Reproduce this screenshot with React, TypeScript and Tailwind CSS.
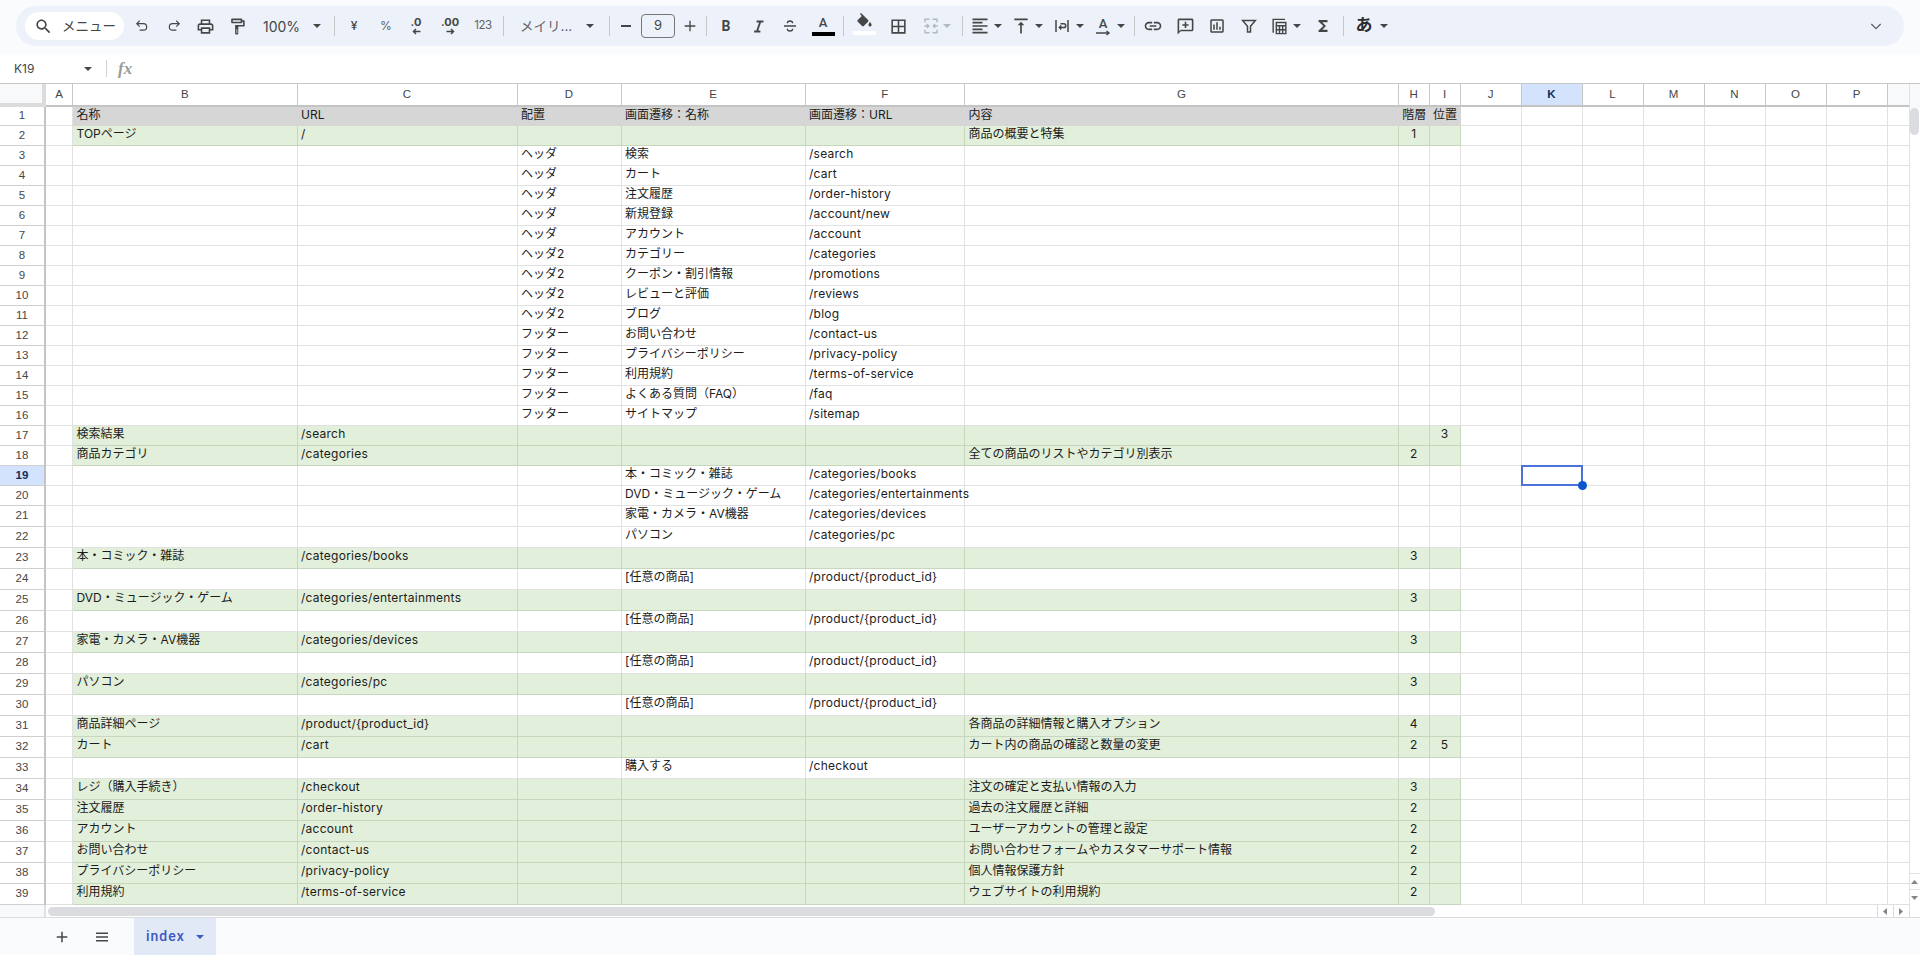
import type { ReactNode } from 'react';

type Row = { green?: boolean; head?: boolean; cells: string[] };

const link = (place: string, name: string, url: string): Row => ({ cells: ['', '', place, name, url, '', '', ''] });
const page = (name: string, url: string, text = '', level = '', pos = ''): Row => ({
  green: true,
  cells: [name, url, '', '', '', text, level, pos],
});

const rows: Row[] = [
  { head: true, cells: ['名称', 'URL', '配置', '画面遷移：名称', '画面遷移：URL', '内容', '階層', '位置'] },
  page('TOPページ', '/', '商品の概要と特集', '1'),
  link('ヘッダ', '検索', '/search'),
  link('ヘッダ', 'カート', '/cart'),
  link('ヘッダ', '注文履歴', '/order-history'),
  link('ヘッダ', '新規登録', '/account/new'),
  link('ヘッダ', 'アカウント', '/account'),
  link('ヘッダ2', 'カテゴリー', '/categories'),
  link('ヘッダ2', 'クーポン・割引情報', '/promotions'),
  link('ヘッダ2', 'レビューと評価', '/reviews'),
  link('ヘッダ2', 'ブログ', '/blog'),
  link('フッター', 'お問い合わせ', '/contact-us'),
  link('フッター', 'プライバシーポリシー', '/privacy-policy'),
  link('フッター', '利用規約', '/terms-of-service'),
  link('フッター', 'よくある質問（FAQ）', '/faq'),
  link('フッター', 'サイトマップ', '/sitemap'),
  page('検索結果', '/search', '', '', '3'),
  page('商品カテゴリ', '/categories', '全ての商品のリストやカテゴリ別表示', '2'),
  link('', '本・コミック・雑誌', '/categories/books'),
  link('', 'DVD・ミュージック・ゲーム', '/categories/entertainments'),
  link('', '家電・カメラ・AV機器', '/categories/devices'),
  link('', 'パソコン', '/categories/pc'),
  page('本・コミック・雑誌', '/categories/books', '', '3'),
  link('', '[任意の商品]', '/product/{product_id}'),
  page('DVD・ミュージック・ゲーム', '/categories/entertainments', '', '3'),
  link('', '[任意の商品]', '/product/{product_id}'),
  page('家電・カメラ・AV機器', '/categories/devices', '', '3'),
  link('', '[任意の商品]', '/product/{product_id}'),
  page('パソコン', '/categories/pc', '', '3'),
  link('', '[任意の商品]', '/product/{product_id}'),
  page('商品詳細ページ', '/product/{product_id}', '各商品の詳細情報と購入オプション', '4'),
  page('カート', '/cart', 'カート内の商品の確認と数量の変更', '2', '5'),
  link('', '購入する', '/checkout'),
  page('レジ（購入手続き）', '/checkout', '注文の確定と支払い情報の入力', '3'),
  page('注文履歴', '/order-history', '過去の注文履歴と詳細', '2'),
  page('アカウント', '/account', 'ユーザーアカウントの管理と設定', '2'),
  page('お問い合わせ', '/contact-us', 'お問い合わせフォームやカスタマーサポート情報', '2'),
  page('プライバシーポリシー', '/privacy-policy', '個人情報保護方針', '2'),
  page('利用規約', '/terms-of-service', 'ウェブサイトの利用規約', '2'),
];

const letters = ['A', 'B', 'C', 'D', 'E', 'F', 'G', 'H', 'I', 'J', 'K', 'L', 'M', 'N', 'O', 'P'];

const Icon = ({ d, size = 18, color = '#444746' }: { d: string; size?: number; color?: string }) => (
  <svg width={size} height={size} viewBox="0 0 24 24" fill={color} fillRule="evenodd">
    <path d={d} />
  </svg>
);

const Line = ({ d, size = 18, width = 2, color = '#444746' }: { d: string; size?: number; width?: number; color?: string }) => (
  <svg width={size} height={size} viewBox="0 0 24 24" fill="none" stroke={color} strokeWidth={width}>
    <path d={d} />
  </svg>
);

const Caret = ({ color = '#444746' }: { color?: string }) => (
  <svg width="8" height="4" viewBox="0 0 8 4">
    <path d="M0 0h8L4 4z" fill={color} />
  </svg>
);

const Divider = ({ w }: { w: string }) => (
  <div className={`flex h-full items-center justify-center ${w}`}>
    <div className="h-5 w-px bg-[#c7c7c7]" />
  </div>
);

const Tool = ({ w, children }: { w: string; children: ReactNode }) => (
  <div className={`flex h-full shrink-0 items-center justify-center ${w}`}>{children}</div>
);

const SmallArrow = ({ left }: { left?: boolean }) => (
  <svg width="9" height="7" viewBox="0 0 9 7" className="mt-px">
    <path d={left ? 'M8.5 3.5H2M4 1 1.5 3.5 4 6' : 'M.5 3.5H7M5 1l2.5 2.5L5 6'} fill="none" stroke="#444746" strokeWidth="1.5" />
  </svg>
);

const Toolbar = () => (
  <div className="flex h-[54px] bg-[#f9fbfd] pt-[6px] pr-4 pb-2 pl-4">
    <div className="flex h-10 w-full items-center rounded-[20px] bg-[#edf2fa] pl-[9px] text-[#444746]">
      <div className="mr-[2px] flex h-7 w-[99px] shrink-0 items-center rounded-full bg-white pl-[9px]">
        <Icon size={19} d="M15.5 14h-.79l-.28-.27C15.41 12.59 16 11.11 16 9.5 16 5.91 13.09 3 9.5 3S3 5.91 3 9.5 5.91 16 9.5 16c1.61 0 3.09-.59 4.23-1.57l.27.28v.79l5 4.99L20.49 19l-4.99-5zm-6 0C7.01 14 5 11.99 5 9.5S7.01 5 9.5 5 14 7.01 14 9.5 11.99 14 9.5 14z" />
        <span className="ml-[9px] text-[13.5px] whitespace-nowrap">メニュー</span>
      </div>
      <Tool w="w-[32px]">
        <Line size={14} d="M8 13 3 8l5-5M3 8h11.5a5.5 5.5 0 0 1 0 11H8" />
      </Tool>
      <Tool w="w-[31px]">
        <Line size={14} d="M16 13l5-5-5-5M21 8H9.5a5.5 5.5 0 0 0 0 11H16" />
      </Tool>
      <Tool w="w-[33px]">
        <Icon size={19} d="M19 8h-1V3H6v5H5c-1.66 0-3 1.34-3 3v6h4v4h12v-4h4v-6c0-1.66-1.34-3-3-3zM8 5h8v3H8V5zm8 12v2H8v-4h8v2zm2-2v-2H6v2H4v-4c0-.55.45-1 1-1h14c.55 0 1 .45 1 1v4h-2z" />
      </Tool>
      <Tool w="w-[30px]">
        <Icon size={19} d="M18 4V3c0-.55-.45-1-1-1H5c-.55 0-1 .45-1 1v4c0 .55.45 1 1 1h12c.55 0 1-.45 1-1V6h1v4H9v11c0 .55.45 1 1 1h2c.55 0 1-.45 1-1v-9h8V4h-3zM16 6H6V4h10v2zM10.8 15.5h.9v5h-.9z" />
      </Tool>
      <div className="flex h-full w-[76px] shrink-0 items-center pl-[11px]">
        <span className="w-[50px] text-[14px]">100%</span>
        <Caret />
      </div>
      <Divider w="w-[12px]" />
      <Tool w="w-[28px]">
        <span className="text-[12px] font-medium">¥</span>
      </Tool>
      <Tool w="w-[36px]">
        <span className="text-[12px] text-[#5f6368]">%</span>
      </Tool>
      <Tool w="w-[24px]">
        <div className="flex flex-col items-center">
          <span className="h-[10px] text-[11px] leading-[10px] font-bold">.0</span>
          <SmallArrow left />
        </div>
      </Tool>
      <Tool w="w-[44px]">
        <div className="flex flex-col items-center">
          <span className="h-[10px] text-[11px] leading-[10px] font-bold">.00</span>
          <SmallArrow />
        </div>
      </Tool>
      <Tool w="w-[22px]">
        <span className="text-[11.5px] tracking-[-0.4px] text-[#5f6368]">123</span>
      </Tool>
      <Divider w="w-[18px]" />
      <div className="flex h-full w-[88px] shrink-0 items-center pl-[8px]">
        <span className="w-[66px] text-[13.5px] whitespace-nowrap text-[#5f6368]">メイリ...</span>
        <Caret />
      </div>
      <Divider w="w-[18px]" />
      <Tool w="w-[16px]">
        <div className="h-[2px] w-[10px] bg-[#444746]" />
      </Tool>
      <div className="ml-[7px] flex h-6 w-[34px] shrink-0 items-center justify-center rounded-[4px] border border-[#747775] text-[13px]">
        9
      </div>
      <Tool w="w-[30px]">
        <Line size={16} d="M12 4v16M4 12h16" />
      </Tool>
      <Divider w="w-[2px]" />
      <Tool w="w-[38px]">
        <span className="font-['Roboto',sans-serif] text-[14px] font-bold">B</span>
      </Tool>
      <Tool w="w-[26px]">
        <Line size={15} width={3} d="M9 4h11M5 20h10M15 4 9.5 20" />
      </Tool>
      <Tool w="w-[38px]">
        <Line size={16} width={2} d="M3 12h18M16 8c0-2.2-1.8-3.5-4-3.5S8 5.8 8 8M8 16c0 2.2 1.8 3.5 4 3.5s4-1.3 4-3.5" />
      </Tool>
      <div className="flex h-full w-[28px] shrink-0 flex-col items-center pt-[9px]">
        <span className="h-[16px] font-['Roboto',sans-serif] text-[13px] leading-[16px] font-medium">A</span>
        <div className="mt-[1px] h-[4px] w-[23px] bg-black" />
      </div>
      <Divider w="w-[12px]" />
      <div className="flex h-full w-[30px] shrink-0 flex-col items-center pt-[7px]">
        <Icon size={19} d="M16.56 8.94 7.62 0 6.21 1.41l2.38 2.38-5.15 5.15c-.59.59-.59 1.54 0 2.12l5.5 5.5c.29.29.68.44 1.06.44s.77-.15 1.06-.44l5.5-5.5c.59-.58.59-1.53 0-2.12zM19 11.5s-2 2.17-2 3.5c0 1.1.9 2 2 2s2-.9 2-2c0-1.33-2-3.5-2-3.5z" />
        <div className="mt-[-1px] h-[4px] w-[23px] bg-white" />
      </div>
      <Tool w="w-[38px]">
        <Icon size={19} d="M3 3v18h18V3H3zm8 16H5v-6h6v6zm0-8H5V5h6v6zm8 8h-6v-6h6v6zm0-8h-6V5h6v6z" />
      </Tool>
      <div className="flex h-full w-[41px] shrink-0 items-center pl-[5px]">
        <Line size={18} color="#b4bac1" d="M10 3H4v4M4 17v4h6M14 3h6v4M20 17v4h-6M3 12h6M6.5 9.5 9 12l-2.5 2.5M21 12h-6M17.5 9.5 15 12l2.5 2.5" />
        <div className="ml-[3px]">
          <Caret color="#b4bac1" />
        </div>
      </div>
      <Divider w="w-[8px]" />
      <div className="mr-[2px] ml-[2px] flex h-full shrink-0">
        <Tool w="w-[24px]">
          <Icon size={20} d="M15 15H3v2h12v-2zm0-8H3v2h12V7zM3 13h18v-2H3v2zm0 8h18v-2H3v2zM3 3v2h18V3H3z" />
        </Tool>
        <Tool w="w-[12px]">
          <Caret />
        </Tool>
      </div>
      <div className="ml-[3px] flex h-full shrink-0">
        <Tool w="w-[24px]">
          <Icon size={20} d="M8 11h3v10h2V11h3l-4-4-4 4zM4 3v2h16V3H4z" />
        </Tool>
        <Tool w="w-[12px]">
          <Caret />
        </Tool>
      </div>
      <div className="ml-[5px] flex h-full shrink-0">
        <Tool w="w-[24px]">
          <Line size={18} d="M4 4v16M20 4v16M10 9h4.5a2.5 2.5 0 0 1 0 5H9M11 11.5 8.5 14l2.5 2.5" />
        </Tool>
        <Tool w="w-[12px]">
          <Caret />
        </Tool>
      </div>
      <div className="ml-[5px] flex h-full shrink-0">
        <Tool w="w-[24px]">
          <div className="flex flex-col items-center">
            <span className="h-[13px] font-['Roboto',sans-serif] text-[13px] leading-[13px] font-medium">A</span>
            <svg width="15" height="6" viewBox="0 0 15 6">
              <path d="M0 3h13M10.5 1 13 3l-2.5 2" fill="none" stroke="#444746" strokeWidth="1.4" />
            </svg>
          </div>
        </Tool>
        <Tool w="w-[12px]">
          <Caret />
        </Tool>
      </div>
      <Divider w="w-[14px]" />
      <Tool w="w-[24px]">
        <Icon size={20} d="M3.9 12c0-1.71 1.39-3.1 3.1-3.1h4V7H7c-2.76 0-5 2.24-5 5s2.24 5 5 5h4v-1.9H7c-1.71 0-3.1-1.39-3.1-3.1zM8 13h8v-2H8v2zm9-6h-4v1.9h4c1.71 0 3.1 1.39 3.1 3.1s-1.39 3.1-3.1 3.1h-4V17h4c2.76 0 5-2.24 5-5s-2.24-5-5-5z" />
      </Tool>
      <Tool w="w-[40px]">
        <Icon size={19} d="M20 2H4c-1.1 0-2 .9-2 2v18l4-4h14c1.1 0 2-.9 2-2V4c0-1.1-.9-2-2-2zm0 14H6l-2 2V4h16v12zM11 6h2v3h3v2h-3v3h-2v-3H8V9h3z" />
      </Tool>
      <Tool w="w-[24px]">
        <Icon size={18} d="M19 3H5c-1.1 0-2 .9-2 2v14c0 1.1.9 2 2 2h14c1.1 0 2-.9 2-2V5c0-1.1-.9-2-2-2zm0 16H5V5h14v14zM7 10h2v7H7zm4-3h2v10h-2zm4 6h2v4h-2z" />
      </Tool>
      <Tool w="w-[40px]">
        <Line size={18} d="M3.5 4.5h17L14 12.5V20h-4v-7.5z" />
      </Tool>
      <Tool w="w-[20px]">
        <Line size={19} d="M4 20V3h15M8 7h12v14H8zM8 11h12M8 16h12M12 11v10M16 11v10" width={1.8} />
      </Tool>
      <Tool w="w-[16px]">
        <Caret />
      </Tool>
      <Tool w="w-[36px]">
        <Icon size={18} d="M18 4H6v2l6.5 6L6 18v2h12v-3h-7l5-5-5-5h7z" />
      </Tool>
      <Divider w="w-[4px]" />
      <div className="ml-[5px] flex h-full w-[28px] shrink-0 items-center justify-center text-[17px] font-bold text-[#2b2b2b]">
        あ
      </div>
      <Tool w="w-[12px]">
        <Caret />
      </Tool>
      <div className="mr-4 ml-auto flex h-full w-6 shrink-0 items-center justify-center">
        <Line size={16} width={2} d="M5 9l7 7 7-7" color="#5f6368" />
      </div>
    </div>
  </div>
);

const FormulaBar = () => (
  <div className="flex h-[29px] items-center bg-white pl-[14px]">
    <span className="w-[70px] text-[12px] text-[#444746]">K19</span>
    <Caret />
    <div className="ml-[14px] h-[17px] w-px bg-[#d3d3d3]" />
    <span className="ml-[11px] font-['Liberation_Serif',serif] text-[17px] font-bold text-[#9b9b9b] italic">fx</span>
  </div>
);

const Cell = ({ row, col, value }: { row: Row; col: number; value: string }) => {
  const centered = col >= 6;
  const latin = value.startsWith('/');
  const tone = row.head
    ? 'bg-[#d6d6d6]'
    : row.green
      ? 'border-r border-b border-[#c6d7bd] bg-[#e2efda]'
      : 'border-r border-b border-[#e1e1e1] bg-white';
  return (
    <div
      className={`h-full text-[12px] leading-[15px] whitespace-nowrap text-[#1c1c1c] ${tone} ${
        centered ? 'text-center' : 'px-[3.5px]'
      } ${latin ? 'relative z-[1] tracking-[0.25px]' : ''}`}
    >
      {value}
    </div>
  );
};

const Sheet = () => (
  <div className="grid h-[821px] grid-cols-[46px_27px_224.5px_220px_104px_184px_159.5px_434px_30.5px_31px_61px_61px_61px_61px_61px_61px_61px_21px] grid-rows-[23px_19px_repeat(19,20px)_repeat(19,21px)] overflow-hidden">
    <div className="border-r-[4px] border-b-[4px] border-[#dcdcdc] bg-[#f8f9fa]" />
    {letters.map((l) => (
      <div
        key={l}
        className={`flex items-center justify-center border-r border-b-2 border-r-[#c7c7c7] border-b-[#c4c4c4] font-['Liberation_Sans',sans-serif] text-[11.5px] ${
          l === 'K' ? 'bg-[#d3e3fd] font-bold text-[#0b2f5c]' : 'bg-white text-[#444746]'
        }`}
      >
        {l}
      </div>
    ))}
    <div className="border-b-2 border-b-[#c4c4c4] bg-[#f8f9fa]" />
    {rows.map((row, i) => (
      <div key={i} className="contents">
        <div
          className={`flex items-center justify-center border-r-2 border-b border-r-[#c4c4c4] border-b-[#cfcfcf] font-['Liberation_Sans',sans-serif] text-[11.5px] ${
            i === 18 ? 'bg-[#d3e3fd] font-bold text-[#0b2f5c]' : 'bg-white text-[#444746]'
          }`}
        >
          {i + 1}
        </div>
        <div className="border-r border-b border-[#e1e1e1] bg-white" />
        {row.cells.map((value, c) => (
          <Cell key={c} row={row} col={c} value={value} />
        ))}
        {letters.slice(9).map((l) => (
          <div
            key={l}
            className={`relative border-r border-b border-[#e1e1e1] bg-white ${i === 18 && l === 'K' ? 'z-10' : ''}`}
          >
            {i === 18 && l === 'K' && (
              <>
                <div className="absolute -top-px -right-px -bottom-px -left-px border-2 border-[#4a72d8]" />
                <div className="absolute -right-[5px] -bottom-[5px] size-[9px] rounded-full bg-[#0b57d0]" />
              </>
            )}
          </div>
        ))}
        <div className="border-b border-[#e1e1e1] bg-white" />
      </div>
    ))}
  </div>
);

const VScroll = () => (
  <div className="flex h-[821px] w-[11.5px] flex-col border-l border-[#e1e1e1] bg-white">
    <div className="h-[24px] shrink-0 bg-[#f8f9fa]" />
    <div className="mx-auto h-[27px] w-[9px] rounded-full bg-[#dadce0]" />
    <div className="flex-1" />
    <div className="flex h-4 items-center justify-center border-t border-[#e1e1e1]">
      <svg width="7" height="4" viewBox="0 0 7 4">
        <path d="M0 4h7L3.5 0z" fill="#80868b" />
      </svg>
    </div>
    <div className="flex h-4 items-center justify-center border-t border-[#e1e1e1]">
      <svg width="7" height="4" viewBox="0 0 7 4">
        <path d="M0 0h7L3.5 4z" fill="#80868b" />
      </svg>
    </div>
  </div>
);

const HScroll = () => (
  <div className="flex h-[13px] items-center border-b border-[#dadce0] bg-white">
    <div className="h-full w-[46px] shrink-0 border-r-2 border-[#e1e1e1] bg-[#f8f9fa]" />
    <div className="ml-[2px] h-[9px] w-[1387px] rounded-full bg-[#dadce0]" />
    <div className="ml-auto flex h-full">
      <div className="flex w-4 items-center justify-center border-l border-[#dadce0]">
        <svg width="4" height="7" viewBox="0 0 4 7">
          <path d="M4 0v7L0 3.5z" fill="#80868b" />
        </svg>
      </div>
      <div className="flex w-4 items-center justify-center border-l border-[#dadce0]">
        <svg width="4" height="7" viewBox="0 0 4 7">
          <path d="M0 0v7l4-3.5z" fill="#80868b" />
        </svg>
      </div>
      <div className="w-[11.5px] border-l border-[#dadce0]" />
    </div>
  </div>
);

const Tabs = () => (
  <div className="flex h-[37px] bg-[#f9fbfd]">
    <div className="flex w-[122px] items-center text-[#444746]">
      <div className="ml-[53px]">
        <Line size={18} d="M12 5v14M5 12h14" />
      </div>
      <div className="ml-[22px]">
        <Line size={18} d="M4 7h16M4 12h16M4 17h16" />
      </div>
    </div>
    <div className="ml-[12px] flex w-[82px] items-center bg-[#e1e9f7] pl-[12px] font-['Roboto',sans-serif] text-[14px] font-medium tracking-[1px] text-[#3c57c2]">
      <span className="w-[50px]">index</span>
      <Caret color="#3c57c2" />
    </div>
  </div>
);

export default function App() {
  return (
    <div className="h-[955px] w-[1920px] overflow-hidden bg-white font-['Inter','Noto_Sans_CJK_JP',sans-serif]">
      <Toolbar />
      <FormulaBar />
      <div className="flex border-t border-[#c7c7c7]">
        <Sheet />
        <VScroll />
      </div>
      <HScroll />
      <Tabs />
    </div>
  );
}
